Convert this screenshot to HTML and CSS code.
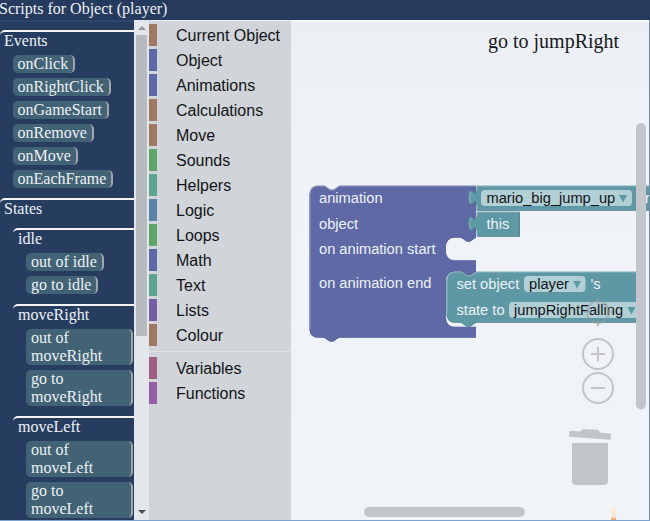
FILE: index.html
```html
<!DOCTYPE html>
<html lang="en">
<head>
<meta charset="utf-8">
<title>Scripts for Object</title>
<link rel="stylesheet" href="styles.css">
</head>
<body>
<div class="window">
  <header class="titlebar">Scripts for Object (player)</header>
  <main class="editor">
    <nav class="scripts">
      <section class="group">
        <h2>Events</h2>
        <button class="pill">onClick</button>
        <button class="pill">onRightClick</button>
        <button class="pill">onGameStart</button>
        <button class="pill">onRemove</button>
        <button class="pill">onMove</button>
        <button class="pill">onEachFrame</button>
      </section>
      <section class="group">
        <h2>States</h2>
        <section class="group state">
          <h2>idle</h2>
          <button class="pill">out of idle</button>
          <button class="pill">go to idle</button>
        </section>
        <section class="group state">
          <h2>moveRight</h2>
          <button class="pill">out of moveRight</button>
          <button class="pill">go to moveRight</button>
        </section>
        <section class="group state">
          <h2>moveLeft</h2>
          <button class="pill">out of moveLeft</button>
          <button class="pill">go to moveLeft</button>
        </section>
      </section>
    </nav>
    <div class="scrollbar">
      <span class="arrow up"></span>
      <span class="thumb"></span>
      <span class="arrow down"></span>
    </div>
    <ul class="toolbox">
      <li class="brown">Current Object</li>
      <li class="indigo">Object</li>
      <li class="indigo">Animations</li>
      <li class="brown">Calculations</li>
      <li class="brown">Move</li>
      <li class="green">Sounds</li>
      <li class="teal">Helpers</li>
      <li class="blue">Logic</li>
      <li class="green">Loops</li>
      <li class="indigo">Math</li>
      <li class="teal">Text</li>
      <li class="violet">Lists</li>
      <li class="brown">Colour</li>
      <li class="separator"></li>
      <li class="rose">Variables</li>
      <li class="purple">Functions</li>
    </ul>
    <section class="workspace">
      <svg class="canvas" width="359" height="500" viewBox="291 20 359 500">
        <defs>
          <linearGradient id="spill" x1="0" y1="0" x2="0" y2="1">
            <stop offset="0" stop-color="#fdeee2"/>
            <stop offset=".75" stop-color="#fbe6d5"/>
            <stop offset="1" stop-color="#ee9a55"/>
          </linearGradient>
        </defs>
        <text class="caption" x="488" y="48">go to jumpRight</text>

        <path class="shade-indigo" transform="translate(0 .8)" d="M309.500 193.500a8 8 0 0 1 8-8H324.500l6 4h3l6-4H476V237l-6 4h-3l-6-4h-7a8 8 0 0 0-8 8v7a8 8 0 0 0 8 8H476V271l-6 4h-3l-6-4h-7a8 8 0 0 0-8 8v39.500a8 8 0 0 0 8 8H476V337H339l-6 4h-3l-6-4h-6.500a8 8 0 0 1-8-8z"/>
        <path class="indigo-block" d="M309.500 193.500a8 8 0 0 1 8-8H324.500l6 4h3l6-4H476V237l-6 4h-3l-6-4h-7a8 8 0 0 0-8 8v7a8 8 0 0 0 8 8H476V271l-6 4h-3l-6-4h-7a8 8 0 0 0-8 8v39.500a8 8 0 0 0 8 8H476V337H339l-6 4h-3l-6-4h-6.500a8 8 0 0 1-8-8z"/>
        <path class="light" d="M310 329v-135.500a7.500 7.500 0 0 1 7.500-7.500H324.500l6 4h3l6-4H476M448.500 257.600a7.500 7.500 0 0 0 5.500 2.400H476M448.500 324a7.500 7.500 0 0 0 5.500 2.400H476"/>
        <g class="label">
          <text x="319" y="203">animation</text>
          <text x="319" y="229">object</text>
          <text x="319" y="254">on animation start</text>
          <text x="319" y="288">on animation end</text>
        </g>

        <path class="shade-teal" transform="translate(0 .8)" d="M476.500 185.500H660V210H476.500V205c0-10-8 8-8-7.500s8 2.500 8-7.500z"/>
        <path class="teal-block" d="M476.500 185.500H660V210H476.500V205c0-10-8 8-8-7.500s8 2.500 8-7.500z"/>
        <path class="light" d="M477 210V205M471 203q-3-5 0-11M477 190V186H650"/>
        <rect class="field" x="481" y="190" width="151" height="16" rx="4"/>
        <text class="value" x="486.500" y="203">mario_big_jump_up</text>
        <path class="caret" d="M619 195h8l-4 7.500z"/>
        <text class="label" x="645" y="203">r</text>

        <path class="shade-teal" transform="translate(.5 .8)" d="M476.500 211.500H519.500V236H476.500V231c0-10-8 8-8-7.500s8 2.500 8-7.500z"/>
        <path class="teal-block" d="M476.500 211.500H519.500V236H476.500V231c0-10-8 8-8-7.500s8 2.500 8-7.500z"/>
        <path class="light" d="M477 236V231M471 229q-3-5 0-11M477 216V212H519"/>
        <text class="label" x="486.500" y="229">this</text>

        <path class="shade-teal" transform="translate(0 .8)" d="M446.500 279.500a8 8 0 0 1 8-8H461.500l6 4h3l6-4H645V322H476l-6 4h-3l-6-4h-6.500a8 8 0 0 1-8-8z"/>
        <path class="teal-block" d="M446.500 279.500a8 8 0 0 1 8-8H461.500l6 4h3l6-4H645V322H476l-6 4h-3l-6-4h-6.500a8 8 0 0 1-8-8z"/>
        <path class="light" d="M447 314v-34.500a7.500 7.500 0 0 1 7.500-7.500H461.500l6 4h3l6-4H636"/>
        <text class="label" x="456.500" y="289">set object</text>
        <rect class="field" x="524" y="276" width="61.500" height="16" rx="4"/>
        <text class="value" x="529" y="289">player</text>
        <path class="caret" d="M573 281h8l-4 7.500z"/>
        <text class="label" x="590.500" y="289">'s</text>
        <text class="label" x="456.500" y="315">state to</text>
        <rect class="field" x="509" y="302" width="135" height="16" rx="4"/>
        <text class="value" x="514" y="315">jumpRightFalling</text>
        <path class="caret" d="M627.500 307h8l-4 7.500z"/>

        <g class="control">
          <g class="center">
            <circle cx="598" cy="312" r="11"/>
            <path d="M598 298v7M598 319v7.500M584 312h7M605 312h7"/>
          </g>
          <circle cx="598" cy="354" r="15"/>
          <path d="M591 354h14M598 347v14"/>
          <circle cx="598" cy="388" r="15"/>
          <path d="M591 388h14"/>
        </g>
        <g class="trash">
          <path d="M569.500 430.800l11 .7 2.500-2.600 15 .8 2.500 3.100 10.500 1-.4 5.900-41.900-3z"/>
          <path d="M572 443h36v38q0 4-4 4h-28q-4 0-4-4z"/>
        </g>
        <rect x="611" y="506" width="5" height="14" fill="url(#spill)"/>
        <rect class="bar" x="636" y="123" width="10" height="286.500" rx="5"/>
        <rect class="bar" x="364" y="507" width="161" height="10" rx="5"/>
        <path class="edge" d="M649.500 20V520"/>
      </svg>
    </section>
  </main>
</div>
</body>
</html>
```

FILE: styles.css
```css
* {
  box-sizing: border-box;
}

body {
  margin: 0;
  overflow: hidden;
}

.window {
  display: flex;
  flex-direction: column;
  width: 650px;
  height: 521px;
  background: #263d60;
  border-bottom: 1px solid #7ba3cb;
  font: 16px/18px "Liberation Serif", serif;
  color: #edf1f5;
}

.titlebar {
  flex: 0 0 20px;
  background: #253a5d;
  text-indent: -1px;
}

.editor {
  display: flex;
  flex: 0 0 500px;
}

.scripts {
  flex: 0 0 134px;
  height: 500px;
  overflow: hidden;
  border-top: 2px solid #2e4669;
  padding-top: 8px;
}

.group {
  display: flex;
  flex-direction: column;
  align-items: flex-start;
  gap: 5px;
  border-top: 2px solid #f3f5f7;
  border-top-left-radius: 5px;
  margin-bottom: 10px;
}

.group h2 {
  margin: 0 0 0 4px;
  font-size: 16px;
  font-weight: 400;
  line-height: 18px;
}

.state {
  align-self: stretch;
  margin: 5px 0 0 13px;
}

.state h2 {
  margin-left: 5px;
}

.pill {
  margin: 0 1px 0 13px;
  padding: 0 5px 0 4.5px;
  border: 0;
  border-right: 2px solid #a3a5aa;
  border-radius: 5px;
  background: #426375;
  color: inherit;
  font: inherit;
  text-align: left;
}

.state .pill {
  padding-left: 5px;
}

.scrollbar {
  display: flex;
  flex: 0 0 15px;
  flex-direction: column;
  align-items: center;
  background: #e3e6eb;
  padding: 6px 0;
}

.arrow {
  border: 4px solid transparent;
  width: 0;
  height: 0;
}

.up {
  border-top: 0;
  border-bottom: 4px solid #96989b;
}

.down {
  border-bottom: 0;
  border-top: 4px solid #4d5155;
  margin-top: auto;
}

.thumb {
  width: 11px;
  height: 301px;
  margin-top: 5px;
  background: #b7bbc0;
}

.toolbox {
  flex: 0 0 142px;
  margin: 0;
  padding: 3px 0 0;
  list-style: none;
  background: #d1d4d9;
  border-top: 1px solid #e9ecef;
  color: #111417;
  font: 16px/24px "Liberation Sans", sans-serif;
}

.toolbox li {
  height: 22px;
  margin-bottom: 3px;
  padding-left: 19px;
  border-left: 8px solid;
  white-space: nowrap;
}

.toolbox .separator {
  height: 1px;
  margin: 5px 0;
  padding: 0;
  border: 0;
  background: #dee1e5;
}

.toolbox .brown { border-color: #9f7764; }
.toolbox .indigo { border-color: #5d69a6; }
.toolbox .green { border-color: #5da569; }
.toolbox .teal { border-color: #5da490; }
.toolbox .blue { border-color: #5d82a7; }
.toolbox .violet { border-color: #755ea6; }
.toolbox .rose { border-color: #a05d84; }
.toolbox .purple { border-color: #955ea6; }

.workspace {
  flex: 0 0 359px;
  background: linear-gradient(#fbfcfd 2px, #ebeff4 2px, #eff3f8 120px, #f0f4f8);
}

.canvas {
  display: block;
}

.caption {
  font: 20px "Liberation Serif", serif;
  fill: #16191c;
}

.label,
.value {
  font: 14.667px "Liberation Sans", sans-serif;
}

.label { fill: #edf2f6; }
.value { fill: #101517; }
.indigo-block { fill: #5e69a6; }
.teal-block { fill: #5e98a5; }
.shade-indigo { fill: #4a5485; }
.shade-teal { fill: #497985; }

.light {
  fill: none;
  stroke: #ffffff;
  stroke-opacity: .3;
}

.field { fill: #b3cfd6; }
.caret { fill: #5e98a5; }

.control {
  fill: none;
  stroke: #a9abad;
  stroke-opacity: .65;
  stroke-width: 2;
}

.center {
  stroke: #96999c;
  stroke-opacity: .5;
}

.trash { fill: #c1c5c9; }
.bar { fill: #c2c5ca; }

.edge {
  stroke: #7189a9;
}
```
